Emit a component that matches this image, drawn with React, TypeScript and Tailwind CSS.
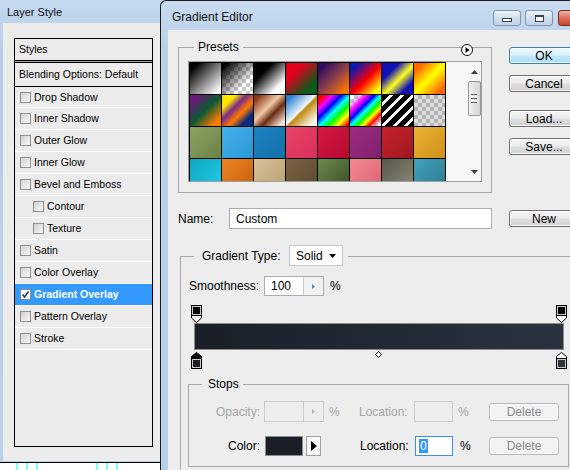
import type { ReactNode } from "react";

const CHECKER = "repeating-conic-gradient(#c8c8c8 0 25%, #ffffff 0 50%) 0 0 / 8px 8px";

// preset swatches, left to right, top to bottom
const PRESETS: string[] = [
  "linear-gradient(135deg, #000 12%, #fff 92%)",
  `linear-gradient(135deg, #000 8%, rgba(0,0,0,0) 70%), ${CHECKER}`,
  "linear-gradient(135deg, #000 30%, #fff 78%)",
  "linear-gradient(135deg, #e2001c 30%, #0a5a1a 78%)",
  "linear-gradient(135deg, #2b0c62 12%, #90404a 52%, #ff7400 90%)",
  "linear-gradient(135deg, #0c18b4 14%, #ff0000 54%, #ffff00 88%)",
  "linear-gradient(135deg, #1212b4 28%, #ffff22 54%, #1212b4 80%)",
  "linear-gradient(135deg, #ff6400 14%, #ffff00 50%, #ff6400 88%)",

  "linear-gradient(135deg, #6a1a7a 14%, #0a5a30 50%, #ff7a00 86%)",
  "linear-gradient(135deg, #ffe400 22%, #7a2a8a 40%, #ff7a00 60%, #0c2a80 80%)",
  "linear-gradient(135deg, #8a3a18 10%, #f2caa8 42%, #6a2a10 62%, #f2ded2 90%)",
  "linear-gradient(135deg, #2a80d0 10%, #f0f8ff 48%, #c08a10 53%, #ffffff 90%)",
  "linear-gradient(135deg, #ff0000 10%, #ff00ff 24%, #0000ff 38%, #00ffff 52%, #00ff00 66%, #ffff00 80%, #ff0000 96%)",
  `linear-gradient(135deg, rgba(255,0,0,0) 12%, #ff00ff 28%, #0000ff 40%, #00ffff 50%, #00ff00 60%, #ffff00 70%, #ff0000 80%, rgba(255,0,0,0) 92%), ${CHECKER}`,
  "repeating-linear-gradient(135deg, #000 0 5px, #fff 5px 8px)",
  `linear-gradient(rgba(120,120,120,0.25), rgba(120,120,120,0.25)), ${CHECKER}`,

  "linear-gradient(135deg, #8ba35f, #6b8249)",
  "linear-gradient(135deg, #44b2ea, #2a96d6)",
  "linear-gradient(135deg, #1c82c2, #1470a8)",
  "linear-gradient(135deg, #ea4468, #d83058)",
  "linear-gradient(135deg, #d41a42, #b80830)",
  "linear-gradient(135deg, #9c2c82, #80206e)",
  "linear-gradient(135deg, #c42229, #a0181f)",
  "linear-gradient(135deg, #ebb334, #d09018)",

  "linear-gradient(135deg, #0ea6bf, #22cbea)",
  "linear-gradient(135deg, #ea8422, #c86010)",
  "linear-gradient(135deg, #d9c29a, #b8a070)",
  "linear-gradient(135deg, #7c6242, #5a4a30)",
  "linear-gradient(135deg, #6c8c4a, #3a4a28)",
  "linear-gradient(135deg, #f38b93, #e06070)",
  "linear-gradient(135deg, #56564a, #8c8c7a)",
  "linear-gradient(135deg, #42a2ba, #2a7a90)",
];

interface StyleRow {
  label: string;
  indent?: boolean;
  checked?: boolean;
}

const STYLE_ROWS: StyleRow[] = [
  { label: "Drop Shadow" },
  { label: "Inner Shadow" },
  { label: "Outer Glow" },
  { label: "Inner Glow" },
  { label: "Bevel and Emboss" },
  { label: "Contour", indent: true },
  { label: "Texture", indent: true },
  { label: "Satin" },
  { label: "Color Overlay" },
  { label: "Gradient Overlay", checked: true },
  { label: "Pattern Overlay" },
  { label: "Stroke" },
];

function Checkbox({ checked }: { checked?: boolean }) {
  return (
    <span
      className={`flex h-[11px] w-[11px] shrink-0 items-center justify-center border border-[#8f8f8f] ${
        checked ? "bg-white" : "bg-[linear-gradient(135deg,#d2d2d2,#f8f8f8)]"
      }`}
    >
      {checked && (
        <svg width="9" height="9" viewBox="0 0 9 9">
          <path d="M1.5 4.5 L3.5 7 L7.5 1.5" fill="none" stroke="#1d2f6a" strokeWidth="1.5" />
        </svg>
      )}
    </span>
  );
}

type ButtonVariant = "normal" | "default" | "disabled";

const BUTTON_STYLES: Record<ButtonVariant, string> = {
  normal:
    "border-[#707070] bg-[linear-gradient(#f4f4f4,#ececec_48%,#dedede_52%,#d2d2d2)] text-black",
  default:
    "border-[#3c7fb1] bg-[linear-gradient(#ecf7fd,#dcf1fc_48%,#c2e7fb_52%,#addcf5)] text-black",
  disabled: "border-[#b5b9bc] bg-[#f3f3f3] text-[#8a8a8a]",
};

function Button({
  children,
  variant = "normal",
  className = "",
}: {
  children: ReactNode;
  variant?: ButtonVariant;
  className?: string;
}) {
  return (
    <div
      className={`flex w-[70px] shrink-0 items-center justify-center rounded-[3px] border text-[12px] leading-none shadow-[inset_0_0_0_1px_rgba(255,255,255,0.75)] ${BUTTON_STYLES[variant]} ${className}`}
    >
      {children}
    </div>
  );
}

function SmallArrow({ color }: { color: string }) {
  return (
    <svg width="3" height="5" viewBox="0 0 3 5">
      <path d="M0 0 L3 2.5 L0 5 Z" fill={color} />
    </svg>
  );
}

function OpacityStop() {
  return (
    <svg width="11" height="18" viewBox="0 0 11 18">
      <path d="M0.5 10.5 V13 L5.5 17.5 L10.5 13 V10.5" fill="#fff" stroke="#000" />
      <rect x="0.5" y="0.5" width="10" height="10" fill="#c8c8c8" stroke="#000" />
      <rect x="2" y="2" width="7" height="7" fill="#000" />
    </svg>
  );
}

function ColorStop({ color, selected }: { color: string; selected?: boolean }) {
  return (
    <svg width="11" height="17" viewBox="0 0 11 17">
      <path d="M0.5 6.5 V4.5 L5.5 0.5 L10.5 4.5 V6.5 Z" fill={selected ? "#000" : "#fff"} stroke="#000" />
      <rect x="0.5" y="6.5" width="10" height="10" fill="#c8c8c8" stroke="#000" />
      <rect x="2" y="8" width="7" height="7" fill={color} />
    </svg>
  );
}

function LayerStyleWindow() {
  return (
    <div className="absolute left-0 top-[-8px] flex h-[471px] w-[220px] flex-col border-b border-black bg-[linear-gradient(#c8dcf1,#b7cee8_12%,#b9d1ea)] pb-[1px]">
      <div className="h-[31px] shrink-0 pl-[7px] pt-[13px] text-[11px] leading-[15px] text-[#111]">Layer Style</div>
      <div className="ml-[3px] flex-1 bg-[#ececec] pl-[11px] pt-[15px]">
        <div className="flex h-[409px] w-[139px] flex-col border border-black text-[10.5px] leading-none">
          <div className="flex h-[21px] items-center pl-[4px]">Styles</div>
          <div className="h-[3px] border-y border-black bg-[#a8a8a8]" />
          <div className="flex h-[24px] items-center border-b border-black pl-[4px]">Blending Options: Default</div>
          {STYLE_ROWS.map((row, i) => (
            <div
              key={row.label}
              className={`flex items-center gap-[3px] border-b border-white ${i === 0 ? "h-[21px]" : "h-[22px]"} ${
                row.indent ? "pl-[18px]" : "pl-[5px]"
              } ${row.checked ? "bg-[#3399ff] font-bold text-white" : ""}`}
            >
              <Checkbox checked={row.checked} />
              <span>{row.label}</span>
            </div>
          ))}
        </div>
      </div>
    </div>
  );
}

function Scrollbar() {
  return (
    <div className="ml-auto flex h-full w-[14px] flex-col items-center">
      <div className="flex h-[19px] items-center justify-center">
        <svg width="7" height="4" viewBox="0 0 7 4">
          <path d="M0 4 L3.5 0 L7 4 Z" fill="#3c3c3c" />
        </svg>
      </div>
      <div className="flex h-[35px] w-[13px] flex-col items-center justify-center gap-[1px] rounded-[2px] border border-[#959595] bg-[linear-gradient(90deg,#f3f3f3,#e2e2e2_50%,#d6d6d6)]">
        <div className="h-[1px] w-[6px] bg-[#606060]" />
        <div className="h-[1px] w-[6px] bg-[#f8f8f8]" />
        <div className="h-[1px] w-[6px] bg-[#606060]" />
        <div className="h-[1px] w-[6px] bg-[#f8f8f8]" />
        <div className="h-[1px] w-[6px] bg-[#606060]" />
      </div>
      <div className="flex-1" />
      <div className="flex h-[19px] items-center justify-center">
        <svg width="7" height="4" viewBox="0 0 7 4">
          <path d="M0 0 L7 0 L3.5 4 Z" fill="#3c3c3c" />
        </svg>
      </div>
    </div>
  );
}

function GradientEditorWindow() {
  return (
    <div className="absolute left-[160px] top-0 flex h-[470px] w-[441px] flex-col overflow-hidden rounded-tl-[6px] border-l border-t border-[#1c1c1c] bg-[linear-gradient(#cadcf0,#b9d0e9_10%,#b9d1ea)]">
      {/* Title bar */}
      <div className="flex h-[29px] shrink-0 items-start">
        <span className="mt-[9px] pl-[11px] text-[12px] leading-[15px] text-[#111]">Gradient Editor</span>
        <div className="ml-auto mt-[9px] flex">
          <div className="flex h-[16px] w-[28px] items-end justify-center rounded-[3px] border border-[#8095b2] bg-[linear-gradient(#eef3f9,#d3dfee_50%,#c2d3e8)] pb-[3px]">
            <div className="h-[4px] w-[10px] border border-[#33435a] bg-white" />
          </div>
          <div className="ml-[4px] flex h-[16px] w-[28px] items-center justify-center rounded-[3px] border border-[#8095b2] bg-[linear-gradient(#eef3f9,#d3dfee_50%,#c2d3e8)]">
            <div className="h-[7px] w-[9px] border border-t-2 border-[#33435a] bg-white" />
          </div>
          <div className="ml-[5px] flex h-[16px] w-[43px] items-center justify-center rounded-l-[3px] border border-[#7a2c22] bg-[linear-gradient(#eeb1a3,#d9715d_50%,#c8432e)]">
            <svg width="9" height="8" viewBox="0 0 9 8">
              <path d="M1 1 L8 7 M8 1 L1 7" stroke="#fff" strokeWidth="2" />
            </svg>
          </div>
        </div>
      </div>

      {/* Body */}
      <div className="ml-[7px] flex flex-1 flex-col bg-[#ededed] pl-[10px] text-[12px] leading-none">
        <div className="mt-[17px] flex items-start">
          {/* Presets */}
          <div className="relative h-[146px] w-[314px] shrink-0 border border-[#a6a6a6]">
            <span className="absolute -top-[8px] left-[15px] bg-[#ededed] px-[4px] leading-[14px]">Presets</span>
            <svg className="absolute -top-[4px] right-[18px]" width="12" height="12" viewBox="0 0 12 12">
              <circle cx="6" cy="6" r="5.5" fill="#fff" stroke="#111" />
              <path d="M4.5 3 L8.5 6 L4.5 9 Z" fill="#000" />
            </svg>
            <div className="ml-[9px] mt-[13px] flex h-[121px] w-[294px] border border-[#a0a0a0] bg-[#f6f6f6]">
              <div className="grid h-[119px] w-[257px] shrink-0 auto-rows-[31px] grid-cols-[repeat(8,31px)] content-start gap-[1px] overflow-hidden bg-black p-[1px]">
                {PRESETS.map((bg, i) => (
                  <div key={i} style={{ background: bg }} />
                ))}
              </div>
              <Scrollbar />
            </div>
          </div>

          {/* Dialog buttons */}
          <div className="ml-[17px] flex flex-col">
            <Button variant="default" className="h-[17px]">OK</Button>
            <Button className="mt-[11px] h-[17px]">Cancel</Button>
            <Button className="mt-[18px] h-[17px]">Load...</Button>
            <Button className="mt-[11px] h-[17px]">Save...</Button>
          </div>
        </div>

        {/* Name */}
        <div className="mt-[15px] flex items-center">
          <span className="w-[51px] shrink-0">Name:</span>
          <div className="flex h-[21px] w-[263px] shrink-0 items-center border border-[#abadb3] bg-white pl-[6px]">Custom</div>
          <Button className="ml-[17px] h-[17px]">New</Button>
        </div>

        {/* Gradient Type group */}
        <div className="relative ml-[2px] mt-[27px] w-[420px] flex-1 border-l border-t border-[#a6a6a6] pl-[8px] pt-[19px]">
          <div className="absolute -top-[12px] left-[13px] flex h-[21px] items-center bg-[#ededed] pl-[8px] pr-[5px]">
            <span className="w-[87px]">Gradient Type:</span>
            <div className="flex h-[21px] w-[54px] items-center border border-[#c6c6c6] bg-white pl-[6px]">
              Solid
              <svg className="ml-auto mr-[6px]" width="7" height="4" viewBox="0 0 7 4">
                <path d="M0 0 L7 0 L3.5 4 Z" fill="#000" />
              </svg>
            </div>
          </div>

          <div className="flex h-[20px] items-center">
            <span className="w-[75px] shrink-0">Smoothness:</span>
            <div className="flex h-[20px] w-[60px] border border-[#abadb3] bg-white">
              <div className="flex flex-1 items-center pl-[6px]">100</div>
              <div className="flex w-[20px] items-center justify-center border-l border-[#c9c9c9] bg-[#f2f2f2]">
                <SmallArrow color="#5b7fb0" />
              </div>
            </div>
            <span className="ml-[6px]">%</span>
          </div>

          {/* Gradient bar with stops */}
          <div className="ml-[5px] mt-[9px] w-[370px]">
            <div className="relative h-[18px]">
              <div className="absolute left-[-3px] top-0">
                <OpacityStop />
              </div>
              <div className="absolute right-[-3px] top-0">
                <OpacityStop />
              </div>
            </div>
            <div className="h-[27px] border border-[#8c8c8c] bg-[linear-gradient(90deg,#1a1f27,#222a34_55%,#2a333f)]" />
            <div className="relative h-[19px]">
              <div className="absolute left-[-3px] top-[2px]">
                <ColorStop color="#1a1f27" selected />
              </div>
              <svg className="absolute left-[181px] top-[1px]" width="7" height="7" viewBox="0 0 7 7">
                <path d="M3.5 0.5 L6.5 3.5 L3.5 6.5 L0.5 3.5 Z" fill="#fff" stroke="#000" />
              </svg>
              <div className="absolute right-[-3px] top-[2px]">
                <ColorStop color="#2b3440" />
              </div>
            </div>
          </div>

          {/* Stops group */}
          <div className="relative -ml-[1px] mt-[15px] h-[83px] w-[381px] border border-[#a6a6a6] pt-[16px]">
            <span className="absolute -top-[8px] left-[13px] bg-[#ededed] pl-[6px] pr-[4px] leading-[14px]">Stops</span>

            <div className="flex h-[21px] items-center text-[#a6a6a6]">
              <span className="w-[71px] shrink-0 text-right">Opacity:</span>
              <div className="ml-[4px] flex h-[21px] w-[60px] shrink-0 border border-[#cacaca] bg-[#ededed]">
                <div className="flex-1" />
                <div className="flex w-[20px] items-center justify-center border-l border-[#cacaca]">
                  <SmallArrow color="#b4b4b4" />
                </div>
              </div>
              <span className="ml-[5px] w-[30px] shrink-0">%</span>
              <span className="w-[55px] shrink-0">Location:</span>
              <div className="h-[21px] w-[39px] shrink-0 border border-[#cacaca] bg-[#ededed]" />
              <span className="ml-[5px] w-[31px] shrink-0">%</span>
              <Button variant="disabled" className="h-[18px]">Delete</Button>
            </div>

            <div className="mt-[13px] flex h-[21px] items-center">
              <span className="w-[71px] shrink-0 text-right">Color:</span>
              <div className="ml-[5px] h-[20px] w-[38px] shrink-0 border border-[#8c8c8c] bg-[#1a1f27]" />
              <div className="ml-[3px] flex h-[20px] w-[15px] shrink-0 items-center justify-center border border-[#a0a0a0] bg-[#f8f8f8]">
                <svg width="6" height="10" viewBox="0 0 6 10">
                  <path d="M0 0 L6 5 L0 10 Z" fill="#000" />
                </svg>
              </div>
              <span className="ml-[39px] w-[55px] shrink-0">Location:</span>
              <div className="flex h-[20px] w-[38px] shrink-0 items-center border border-[#3d8ee2] bg-white pl-[3px]">
                <span className="bg-[#3399ff] px-[1px] py-[1px] text-white">0</span>
              </div>
              <span className="ml-[7px] w-[29px] shrink-0">%</span>
              <Button variant="disabled" className="h-[18px]">Delete</Button>
            </div>
          </div>
        </div>
      </div>
    </div>
  );
}

export default function App() {
  return (
    <div className="relative h-[470px] w-[570px] overflow-hidden bg-white font-['Liberation_Sans',Arial,sans-serif] text-black">
      {/* bits of the canvas showing under the dialogs */}
      <div className="absolute bottom-0 left-0 flex h-[7px] pl-[16px]">
        <div className="w-[2px] bg-[#80ffff]" />
        <div className="ml-[8px] w-[2px] bg-[#80ffff]" />
        <div className="ml-[8px] w-[2px] bg-[#80ffff]" />
        <div className="ml-[58px] w-[2px] bg-[#80ffff]" />
        <div className="ml-[8px] w-[2px] bg-[#80ffff]" />
        <div className="ml-[8px] w-[2px] bg-[#80ffff]" />
      </div>
      <LayerStyleWindow />
      <GradientEditorWindow />
    </div>
  );
}
